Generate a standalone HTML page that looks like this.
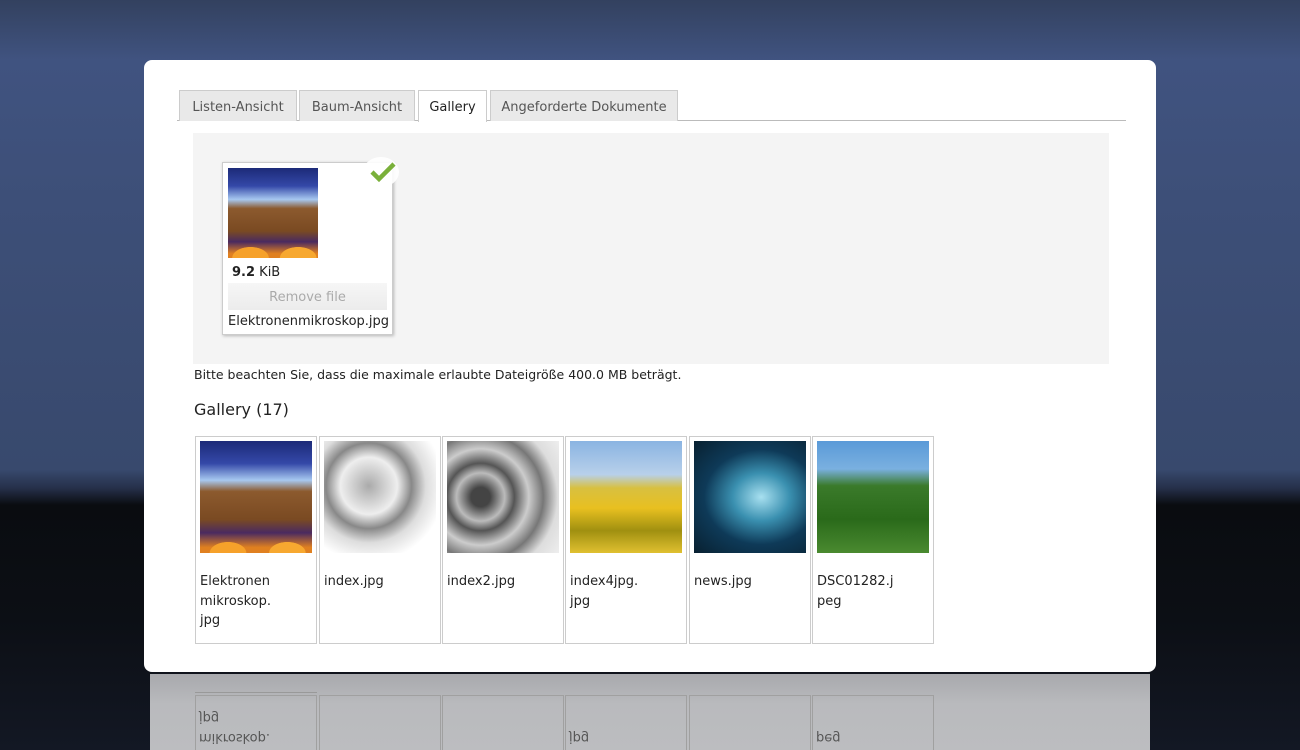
<!DOCTYPE html>
<html style="width:1300px;height:750px;overflow:hidden"><head><meta charset="utf-8"><style>
*{box-sizing:border-box;margin:0;padding:0}
html{background:#0c0f15}
body{width:1300px;height:750px;overflow:hidden;position:relative;font-family:"DejaVu Sans","Liberation Sans",sans-serif;font-size:12px;color:#222;
background:linear-gradient(180deg,#33415f 0px,#405380 60px,#3d4f78 200px,#38496d 470px,#26304a 488px,#0a0c10 505px,#0c0f15 620px,#131824 750px)}
.panel{position:absolute;left:144px;top:60px;width:1012px;height:612px;background:#fff;border-radius:8px}
.tabs{position:absolute;left:33px;top:30px;width:949px;height:31px;border-bottom:1px solid #bbb}
.tab{position:absolute;top:0;height:31px;background:#e9e9e9;border:1px solid #ccc;border-bottom:none;color:#555;font-size:13px;line-height:33px;text-align:center}
.tab.a{background:#fff;color:#222;height:32px}
.drop{position:absolute;left:49px;top:73px;width:916px;height:231px;background:#f4f4f4}
.card{position:absolute;left:29px;top:29px;width:171px;height:173px;background:#fff;border:1px solid #ccc;box-shadow:1px 1px 3px rgba(0,0,0,.25)}
.mic{background:
radial-gradient(ellipse 30px 18px at 25% 100%,#f6a12a 60%,transparent 62%),
radial-gradient(ellipse 30px 18px at 78% 100%,#f7a830 60%,transparent 62%),
linear-gradient(180deg,#1c2a78 0%,#3448a8 20%,#a7c8f0 35%,#8c5a2e 45%,#7a4a22 70%,#4a2a60 82%,#e08020 95%)}
.g{position:absolute;top:376px;width:122px;height:208px;border:1px solid #ccc;background:#fff}
.g .im{position:absolute;left:4px;top:4px;width:112px;height:112px}
.g .t{position:absolute;left:4px;top:135px;font-size:13px;line-height:19.5px;color:#222}
.refl{position:absolute;left:150px;top:674px;width:1000px;height:76px;overflow:hidden;background:linear-gradient(180deg,#a8a9ad,#b9babd 30px,#bcbdc0)}
.rc{position:absolute;top:21px;width:122px;height:70px;border:1px solid #a0a0a0}
.rt{position:absolute;left:4px;font-size:13px;color:#555;transform:scaleY(-1)}
</style></head><body>
<div class="panel">
 <div class="tabs">
  <div class="tab" style="left:2px;width:118px">Listen-Ansicht</div>
  <div class="tab" style="left:122px;width:116px">Baum-Ansicht</div>
  <div class="tab a" style="left:241px;width:69px">Gallery</div>
  <div class="tab" style="left:313px;width:188px">Angeforderte Dokumente</div>
 </div>
 <div class="drop">
  <div class="card">
   <div class="mic" style="position:absolute;left:5px;top:5px;width:90px;height:90px"></div>
   <div style="position:absolute;left:9px;top:102px;font-size:13px"><b>9.2</b> KiB</div>
   <div style="position:absolute;left:5px;top:120px;width:159px;height:27px;background:linear-gradient(#f6f6f6,#ececec);color:#aaa;font-size:13px;text-align:center;line-height:29px">Remove file</div>
   <div style="position:absolute;left:5px;top:151px;font-size:13px">Elektronenmikroskop.jpg</div>
   <div style="position:absolute;left:140px;top:-6px;width:36px;height:30px;background:rgba(255,255,255,.9);border-radius:50%"></div>
   <svg style="position:absolute;left:146px;top:-2px" width="28" height="22" viewBox="0 0 28 22"><path d="M3 11 L10 18 L25 3" stroke="#7ab03a" stroke-width="4.5" fill="none"/></svg>
  </div>
 </div>
 <div style="position:absolute;left:50px;top:307px;font-size:12.5px">Bitte beachten Sie, dass die maximale erlaubte Dateigröße 400.0 MB beträgt.</div>
 <div style="position:absolute;left:50px;top:340px;font-size:16px">Gallery (17)</div>
 <div class="g" style="left:51px"><div class="im mic"></div><div class="t">Elektronen<br>mikroskop.<br>jpg</div></div>
 <div class="g" style="left:175px"><div class="im" style="background:radial-gradient(circle at 40% 40%,#aaa,#eee 30%,#888 45%,#ddd 60%,#fff 80%)"></div><div class="t">index.jpg</div></div>
 <div class="g" style="left:298px"><div class="im" style="background:radial-gradient(circle at 30% 50%,#444 10%,#bbb 25%,#555 35%,#ccc 50%,#777 65%,#ddd 80%,#eee)"></div><div class="t">index2.jpg</div></div>
 <div class="g" style="left:421px"><div class="im" style="background:linear-gradient(180deg,#8ab4e2 0%,#b8d0ea 30%,#d8c040 42%,#e8c020 60%,#a09010 80%,#e0c030)"></div><div class="t">index4jpg.<br>jpg</div></div>
 <div class="g" style="left:545px"><div class="im" style="background:radial-gradient(ellipse at 60% 50%,#a8e0f0 0%,#3a90b0 30%,#0e3a58 60%,#082030)"></div><div class="t">news.jpg</div></div>
 <div class="g" style="left:668px"><div class="im" style="background:linear-gradient(180deg,#5a9ad8 0%,#7ab0e0 25%,#3a7a2a 40%,#2a6a1a 70%,#4a8a30)"></div><div class="t">DSC01282.j<br>peg</div></div>
</div>
<div class="refl">
 <div style="position:absolute;left:45px;top:18px;width:122px;border-top:1px solid #999"></div>
 <div class="rc" style="left:45px"></div><div class="rc" style="left:169px"></div><div class="rc" style="left:292px"></div><div class="rc" style="left:415px"></div><div class="rc" style="left:539px"></div><div class="rc" style="left:662px"></div>
 <div class="rt" style="left:49px;top:36px">jpg</div>
 <div class="rt" style="left:49px;top:56px">mikroskop.</div>
 <div class="rt" style="left:419px;top:56px">jpg</div>
 <div class="rt" style="left:666px;top:56px">peg</div>
</div>
</body></html>
